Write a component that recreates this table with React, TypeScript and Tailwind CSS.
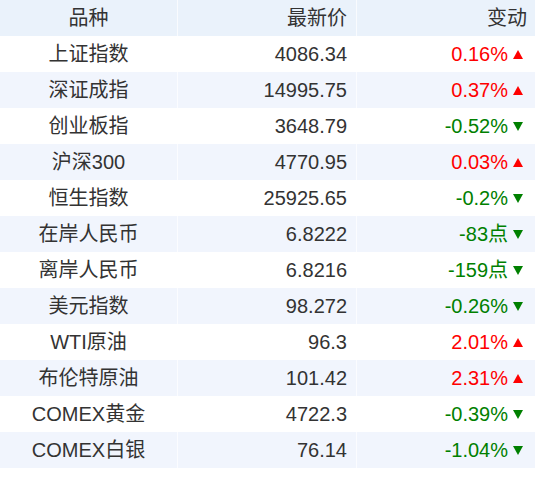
import React from 'react';

type Row = { name: string; price: string; change: string; up: boolean };

const rows: Row[] = [
  { name: '上证指数', price: '4086.34', change: '0.16%', up: true },
  { name: '深证成指', price: '14995.75', change: '0.37%', up: true },
  { name: '创业板指', price: '3648.79', change: '-0.52%', up: false },
  { name: '沪深300', price: '4770.95', change: '0.03%', up: true },
  { name: '恒生指数', price: '25925.65', change: '-0.2%', up: false },
  { name: '在岸人民币', price: '6.8222', change: '-83点', up: false },
  { name: '离岸人民币', price: '6.8216', change: '-159点', up: false },
  { name: '美元指数', price: '98.272', change: '-0.26%', up: false },
  { name: 'WTI原油', price: '96.3', change: '2.01%', up: true },
  { name: '布伦特原油', price: '101.42', change: '2.31%', up: true },
  { name: 'COMEX黄金', price: '4722.3', change: '-0.39%', up: false },
  { name: 'COMEX白银', price: '76.14', change: '-1.04%', up: false },
];

const Arrow: React.FC<{ up: boolean }> = ({ up }) => (
  <svg width="10" height="9" viewBox="0 0 10 9" className="ml-[5px] shrink-0">
    {up ? <polygon points="5,0 10,9 0,9" fill="#ff0000" /> : <polygon points="0,0 10,0 5,9" fill="#008000" />}
  </svg>
);

export default function App() {
  return (
    <div
      className="w-[535px] bg-white text-[20px] text-[#333]"
      style={{ fontFamily: '"Liberation Sans", Arial, "Noto Sans CJK SC", sans-serif' }}
    >
      <div className="grid grid-cols-[178px_179px_1fr] h-9 bg-[#eaf2fb]">
        <div className="flex items-center justify-center border-r border-white/70">品种</div>
        <div className="flex items-center justify-end pr-[9px] border-r border-white/70">最新价</div>
        <div className="flex items-center justify-end pr-[8px]">变动</div>
      </div>
      {rows.map((r, i) => (
        <div
          key={r.name}
          className={`grid grid-cols-[178px_179px_1fr] h-9 ${i % 2 === 1 ? 'bg-[#f1f5fd]' : 'bg-white'}`}
        >
          <div className="flex items-center justify-center border-r border-white/70">{r.name}</div>
          <div className="flex items-center justify-end pr-[9px] border-r border-white/70">{r.price}</div>
          <div className={`flex items-center justify-end pr-[12px] ${r.up ? 'text-[#ff0000]' : 'text-[#008000]'}`}>
            <span>{r.change}</span>
            <Arrow up={r.up} />
          </div>
        </div>
      ))}
    </div>
  );
}
